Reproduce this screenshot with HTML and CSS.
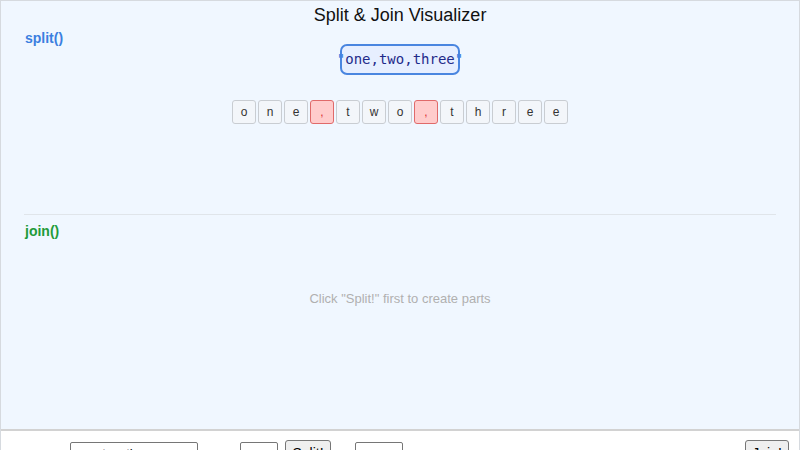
FILE: index.html
```html
<!DOCTYPE html>
<html lang="en">

<head>
    <meta charset="utf-8">
    <meta name="viewport" content="width=device-width, initial-scale=1.0">
    <title>Split &amp; Join Visualizer</title>
    <link rel="stylesheet" href="styles.css">
</head>

<body>

    <div class="app">
        <main class="stage">
            <h1>Split &amp; Join Visualizer</h1>

            <section class="split">
                <h2 class="label blaa">split()</h2>
                <div class="kilde"><span class="quote q-start">"</span><span class="tekst">one,two,three</span><span class="quote q-slut">"</span></div>
                <div id="tegn" class="tegn"></div>
            </section>

            <section class="join">
                <h2 class="label groen">join()</h2>
                <p class="tom">Click "Split!" first to create parts</p>
            </section>
        </main>

        <footer class="controls">
            <label class="lbl lbl-tekst" for="streng">Text:</label>
            <input id="streng" class="felt felt-streng" type="text" value="one,two,three">
            <label class="lbl lbl-sep" for="sep">Sep:</label>
            <input id="sep" class="felt felt-sep" type="text" value=",">
            <button class="knap knap-split">Split!</button>
            <input id="lim" class="felt felt-lim" type="text" value="-">
            <button class="knap knap-join">Join!</button>
        </footer>
    </div>

    <script>
        const tekst = "one,two,three";
        const dest = document.querySelector("#tegn");

        tekst.split("").forEach(c => {
            let klasse = c == "," ? "char sep" : "char";
            dest.insertAdjacentHTML("beforeend", `<span class="${klasse}">${c}</span>`);
        });
    </script>
</body>

</html>
```

FILE: styles.css
```css
* {
    box-sizing: border-box;
    padding: 0;
    margin: 0;
}

body {
    background: white;
    font-family: "Liberation Sans", Arial, sans-serif;
    color: #111;
}

.app {
    border: 1px solid #d6dadf;
    border-bottom: none;
}

.stage {
    height: 428px;
    padding: 3px 23px 0 23px;
    background-color: #f0f7ff;
    display: flex;
    flex-direction: column;
}

h1 {
    font-size: 18px;
    font-weight: normal;
    line-height: 22px;
    text-align: center;
}

.split {
    height: 188px;
    padding-top: 6px;
    display: flex;
    flex-direction: column;
    align-items: center;
}

.label {
    align-self: flex-start;
    font-size: 14px;
    line-height: 12px;
    font-weight: bold;
    padding-left: 1px;
}

.blaa {
    color: #3b7fe0;
}

.groen {
    color: #1f9b3a;
}

.kilde {
    border: 2px solid #4a86e0;
    border-radius: 7px;
    background-color: #e7efff;
    padding: 4px 0;
    font-family: "DejaVu Sans Mono", monospace;
    font-size: 14px;
    line-height: 19px;
    color: #1f2a8a;
}

.quote {
    color: #3b7fe0;
}

.q-start {
    margin-left: -5px;
}

.q-slut {
    margin-right: -5px;
}

.tegn {
    display: flex;
    gap: 2px;
    margin-top: 25px;
}

.char {
    width: 24px;
    height: 24px;
    border: 1px solid #c9cdd2;
    border-radius: 3px;
    background-color: #f3f6fa;
    font-size: 12px;
    color: #333;
    display: flex;
    align-items: center;
    justify-content: center;
}

.char.sep {
    background-color: #ffcccc;
    border-color: #e06a6a;
    color: #d33;
}

.join {
    flex: 1;
    border-top: 1px solid #e0e5ea;
    padding-top: 10px;
    display: flex;
    flex-direction: column;
}

.tom {
    margin-top: 54px;
    font-size: 13px;
    line-height: 15px;
    color: #b0b0b0;
    text-align: center;
}

.controls {
    border-top: 2px solid #d2d2d2;
    display: flex;
    align-items: center;
    padding: 9px 10px 12px 10px;
    font-size: 12px;
}

.lbl {
    color: #444;
    padding-top: 5px;
}

.lbl-tekst {
    width: 59px;
    padding-left: 1px;
}

.lbl-sep {
    width: 30px;
    margin-left: 12px;
    padding-left: 2px;
}

.felt {
    height: 22px;
    border: 1px solid #767676;
    border-radius: 2px;
    padding: 0 6px;
    font-family: "Liberation Sans", Arial, sans-serif;
    font-size: 13px;
    background: white;
}

.felt-streng {
    width: 128px;
}

.felt-sep {
    width: 38px;
}

.felt-lim {
    width: 48px;
    margin-left: 24px;
}

.knap {
    height: 26px;
    padding: 0 6px;
    border: 1px solid #767676;
    border-radius: 3px;
    background-color: #efefef;
    font-family: "Liberation Sans", Arial, sans-serif;
    font-size: 14px;
}

.knap-split {
    width: 46px;
    margin-left: 7px;
}

.knap-join {
    width: 44px;
    margin-left: auto;
}
```
